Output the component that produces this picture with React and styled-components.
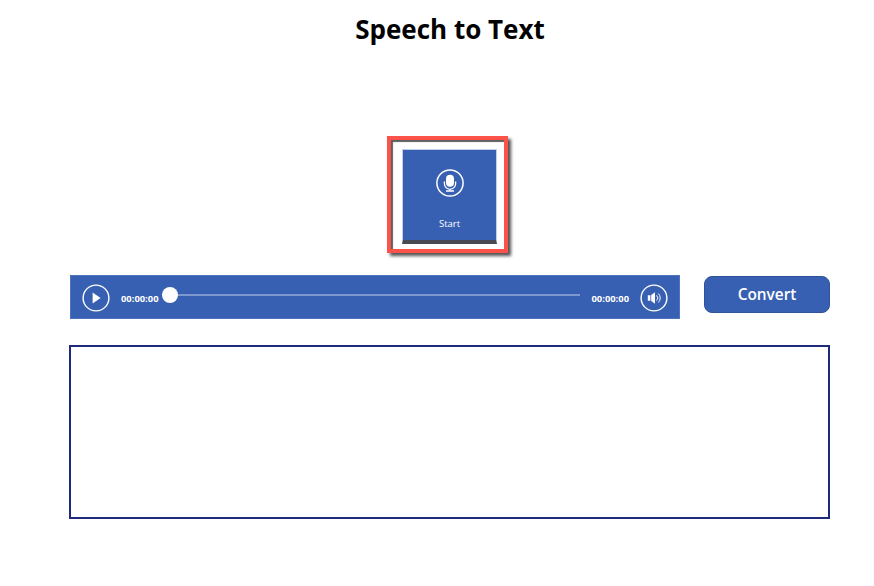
import React from "react";
import styled, { createGlobalStyle } from "styled-components";

const Global = createGlobalStyle`
  html, body { margin: 0; padding: 0; background: #fff; }
  body { font-family: "Open Sans", "Noto Sans", sans-serif; }
`;

const Page = styled.div`
  width: 874px;
  height: 586px;
  box-sizing: border-box;
  padding: 0 44px 0 70px;
  display: flex;
  flex-direction: column;
  overflow: hidden;
`;

const Title = styled.h1`
  margin: 10px 0 0;
  height: 38px;
  line-height: 38px;
  font-size: 26px;
  font-weight: 700;
  color: #000;
  text-align: center;
`;

const Center = styled.div`
  display: flex;
  justify-content: center;
  margin-top: 88px;
  padding-right: 5px;
`;

const Highlight = styled.div`
  width: 121px;
  height: 117px;
  box-sizing: border-box;
  border: 4px solid #fb5249;
  padding: 9px 0 0 11px;
  box-shadow: 3px 3px 3px rgba(40, 40, 40, 0.8), inset 2px 2px 1px rgba(40, 40, 40, 0.75);
  background: #fff;
`;

const MicButton = styled.button`
  width: 95px;
  height: 95px;
  box-sizing: border-box;
  padding: 0;
  margin: 0;
  background: #3860b2;
  border: 1px solid #c3cfe8;
  border-bottom: 4px solid #4a4a55;
  color: #fff;
  display: flex;
  flex-direction: column;
  align-items: center;
  font-family: inherit;
`;

const MicIcon = styled.svg`
  width: 30px;
  height: 30px;
  margin-top: 18px;
  display: block;
`;

const MicLabel = styled.span`
  font-size: 9.5px;
  font-weight: 500;
  line-height: 12px;
  margin-top: 20px;
  color: #fff;
`;

const Row = styled.div`
  display: flex;
  align-items: flex-start;
  margin-top: 22px;
`;

const Player = styled.div`
  width: 610px;
  height: 44px;
  box-sizing: border-box;
  background: #3860b2;
  border: 1px solid #4f74bf;
  padding: 0 11px;
  display: flex;
  align-items: center;
`;

const RoundIcon = styled.svg`
  width: 28px;
  height: 28px;
  flex: none;
  display: block;
  margin: 1px 0 0 ${(p) => p.$left || 0}px;
`;

const Time = styled.span`
  font-size: 9.4px;
  font-weight: 700;
  color: #fff;
  line-height: 12px;
  margin: 3px 0 0 ${(p) => p.$left}px;
  flex: none;
`;

const Track = styled.div`
  position: relative;
  flex: 1;
  height: 2px;
  margin: 0 11px 5px 11px;
  background: #7d97cf;
`;

const Thumb = styled.div`
  position: absolute;
  left: -8px;
  top: -7px;
  width: 16px;
  height: 16px;
  border-radius: 50%;
  background: #fff;
`;

const Convert = styled.button`
  width: 126px;
  height: 37px;
  box-sizing: border-box;
  margin: 1px 0 0 24px;
  background: #3860b2;
  border: 1px solid #2f5299;
  border-radius: 8px;
  color: #fff;
  font-family: inherit;
  font-size: 15.4px;
  font-weight: 600;
  padding: 0 0 1px;
`;

const TextArea = styled.div`
  width: 761px;
  height: 174px;
  box-sizing: border-box;
  margin: 26px 0 0 -1px;
  border: 2px solid #1f2a7a;
  background: #fff;
`;

export default function App() {
  return (
    <>
      <Global />
      <Page>
        <Title>Speech to Text</Title>
        <Center>
          <Highlight>
            <MicButton>
              <MicIcon viewBox="0 0 30 30" fill="none" stroke="#fff">
                <circle cx="15" cy="15" r="13.1" strokeWidth="1.5" />
                <rect x="11" y="6.8" width="8" height="12" rx="4" fill="#fff" stroke="none" />
                <path d="M9.4 13.5v2.2a5.6 5.6 0 0 0 11.2 0v-2.2M15 21.3v1.7M11 23h8" strokeWidth="1.3" />
              </MicIcon>
              <MicLabel>Start</MicLabel>
            </MicButton>
          </Highlight>
        </Center>
        <Row>
          <Player>
            <RoundIcon viewBox="0 0 28 28" fill="none" stroke="#fff">
              <circle cx="14" cy="14" r="12.9" strokeWidth="1.4" />
              <path d="M10.6 8.6 18.6 14 10.6 19.4z" fill="#fff" stroke="none" />
            </RoundIcon>
            <Time $left={11}>00:00:00</Time>
            <Track>
              <Thumb />
            </Track>
            <Time $left={0}>00:00:00</Time>
            <RoundIcon $left={11} viewBox="0 0 28 28" fill="none" stroke="#fff">
              <circle cx="14" cy="14" r="12.9" strokeWidth="1.4" />
              <path d="M7.8 11.2h2.6v5.6H7.8zM11.2 11 15 8.2v11.6L11.2 17z" fill="#fff" stroke="none" />
              <path d="M16.6 11.4a3.6 3.6 0 0 1 0 5.2M18.4 9.6a6.2 6.2 0 0 1 0 8.8" strokeWidth="1" />
            </RoundIcon>
          </Player>
          <Convert>Convert</Convert>
        </Row>
        <TextArea />
      </Page>
    </>
  );
}
